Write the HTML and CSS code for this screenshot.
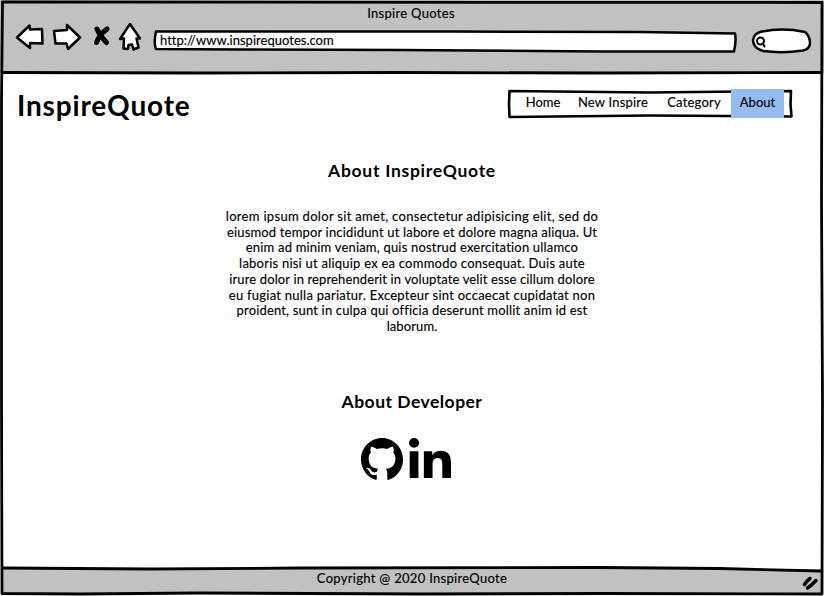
FILE: index.html
```
<!DOCTYPE html>
<html lang="en">
<head>
<meta charset="utf-8">
<title>Inspire Quotes</title>
<link rel="stylesheet" href="styles.css">
</head>
<body>
<div class="window">
  <header class="chrome">
    <div class="title"><span>Inspire Quotes</span></div>
    <div class="toolbar">
      <svg class="controls" width="130" height="32" viewBox="14 21 130 32">
        <g class="ink">
          <path d="M17 37.500L29.500 25.500L30 29.500L42 29L42.500 43.500L30 43V48Z"/>
          <path d="M54 31L67 30V25L80 37.500L68 49L66.500 43.500L55.500 43.500Z"/>
          <path d="M130 24L140 38.500L136.500 38.500L138.500 47.500L133.500 49.500L132 44.500L128.500 45L128 49L123.500 48.500L124 38.500L120 39Z"/>
        </g>
        <path class="cross" d="M97 29Q100 36 106.500 42.500M107 29Q99 35 96.500 42.500"/>
      </svg>
      <div class="address">
        <svg class="outline" width="584" height="24" viewBox="153 29 584 24"><path class="ink" d="M156 31.500L450 31.500L640 32L735 33.500Q736.500 41 734 51.500L600 51.500L400 50L240 49.500L156 49Q153.500 43 156 31.500Z"/></svg>
        <span class="url">http://www.inspirequotes.com</span>
      </div>
      <svg class="search" width="62" height="26" viewBox="750 28 62 26">
        <path class="ink" d="M762 31.500Q783 27.500 805 32Q810 36 810 43Q810 49 803 50.500Q783 53.500 763 51Q753 48 753 40Q754 33 762 31.500Z"/>
        <circle class="lens" cx="760.500" cy="41" r="3.500"/><path class="lens" d="M763 43.500L764.500 46.500"/>
      </svg>
    </div>
  </header>
  <main class="page">
    <div class="top">
      <h1>InspireQuote</h1>
      <nav>
        <svg class="outline" width="287" height="30" viewBox="507 89 287 30"><path class="nav-line" d="M509.500 91L650 92.500L791 91L790.500 104L791.500 116.500L650 115.500L509.500 117L509 104Z"/></svg>
        <a class="home">Home</a><a class="new">New Inspire</a><a class="category">Category</a><a class="active">About</a>
      </nav>
    </div>
    <section class="about">
      <h2 class="h-quote">About InspireQuote</h2>
      <p>
        <span class="l1">lorem ipsum dolor sit amet, consectetur adipisicing elit, sed do</span>
        <span class="l2">eiusmod tempor incididunt ut labore et dolore magna aliqua. Ut</span>
        <span class="l3">enim ad minim veniam, quis nostrud exercitation ullamco</span>
        <span class="l4">laboris nisi ut aliquip ex ea commodo consequat. Duis aute</span>
        <span class="l5">irure dolor in reprehenderit in voluptate velit esse cillum dolore</span>
        <span class="l6">eu fugiat nulla pariatur. Excepteur sint occaecat cupidatat non</span>
        <span class="l7">proident, sunt in culpa qui officia deserunt mollit anim id est</span>
        <span class="l8">laborum.</span>
      </p>
    </section>
    <section class="developer">
      <h2 class="h-dev">About Developer</h2>
      <div class="social">
        <svg width="42" height="42" viewBox="0 0 16 15.650" preserveAspectRatio="none"><path d="M8 0C3.580 0 0 3.580 0 8c0 3.540 2.290 6.530 5.470 7.590.4.070.55-.17.55-.38 0-.19-.01-.82-.01-1.490-2.010.37-2.530-.49-2.690-.94-.09-.23-.48-.94-.82-1.130-.28-.15-.68-.52-.01-.53.63-.01 1.080.58 1.230.82.72 1.210 1.870.87 2.330.66.070-.52.28-.87.51-1.070-1.780-.2-3.640-.89-3.640-3.950 0-.87.31-1.590.82-2.150-.08-.2-.36-1.020.08-2.120 0 0 .67-.21 2.200.82.64-.18 1.320-.27 2-.27s1.360.09 2 .27c1.530-1.040 2.200-.82 2.200-.82.44 1.100.16 1.920.08 2.120.51.56.82 1.270.82 2.150 0 3.070-1.870 3.750-3.650 3.950.29.25.54.73.54 1.480 0 1.070-.01 1.930-.01 2.200 0 .21.15.46.55.38A8.010 8.010 0 0 0 16 8c0-4.420-3.580-8-8-8z"/></svg>
        <svg width="42" height="40" viewBox="0 0 448 448" preserveAspectRatio="none"><path d="M100.280 448H7.400V148.900h92.880zM53.790 108.100C24.090 108.100 0 83.500 0 53.800a53.790 53.790 0 0 1 107.580 0c0 29.700-24.100 54.300-53.790 54.300zM447.900 448h-92.680V302.400c0-34.700-.7-79.200-48.290-79.200-48.290 0-55.690 37.700-55.690 76.700V448h-92.780V148.900h89.080v40.800h1.300c12.400-23.500 42.690-48.300 87.880-48.300 94 0 111.280 61.900 111.280 142.300V448z"/></svg>
      </div>
    </section>
  </main>
  <footer><span>Copyright @ 2020 InspireQuote</span></footer>
  <svg class="frame" width="824" height="596" viewBox="0 0 824 596">
    <path class="gray" d="M3 568.500L300 568.500L600 567.500L720 568.500L821 571V593H3Z"/>
    <path class="line" d="M2.500 2L822 2.500L821.500 200L822.500 400L822 594L600 593.500L420 594L200 593L80 594L2 593.500L1.500 400L1.500 100Z"/>
    <path class="line" d="M3 72.500L200 73L400 72.500L600 73L822 72.500M3 568L150 569L300 568L600 567.500L720 568.500L821 571"/>
    <path class="grip" d="M804.500 584.500Q807 580.500 810 578.500M807.500 588Q812 585 816 580.500"/>
  </svg>
</div>
</body>
</html>
```
FILE: styles.css
```
* { box-sizing: border-box; }
body { margin: 0; background: #fff; color: #000; font: 13px/16px Lato, "Open Sans", sans-serif; font-variant-ligatures: none; -webkit-text-stroke: .15px #000; }
svg { display: block; }
.window { position: relative; width: 824px; height: 596px; display: flex; flex-direction: column; overflow: hidden; }
.chrome { height: 73px; background: #c1c1c1; padding: 6px 12px 0 14px; }
.title { text-align: center; height: 15px; line-height: 14px; padding-right: 4px; letter-spacing: .3px; }
.toolbar { display: flex; align-items: flex-start; }
.controls { margin-right: 9px; }
.address { position: relative; width: 584px; height: 24px; margin: 8px 13px 0 0; padding: 3px 0 0 7px; }
.search { margin-top: 7px; }
.outline { position: absolute; left: 0; top: 0; }
.url { position: relative; white-space: nowrap; letter-spacing: .02px; }
.ink { fill: #fff; stroke: #000; stroke-width: 2.5; stroke-linejoin: round; }
.cross { fill: none; stroke: #000; stroke-width: 5; stroke-linecap: round; }
.lens { fill: none; stroke: #000; stroke-width: 2; stroke-linecap: round; }
.page { flex: 1; }
.top { display: flex; justify-content: space-between; padding: 16px 30px 0 17px; height: 80px; }
h1 { margin: 0; font-size: 28px; line-height: 32px; font-weight: 700; letter-spacing: .85px; -webkit-text-stroke: 0; }
nav { position: relative; width: 287px; height: 30px; display: flex; padding-left: 10px; }
nav a { position: relative; height: 29px; line-height: 27px; text-align: center; white-space: nowrap; }
.nav-line { fill: #fff; stroke: #000; stroke-width: 2.6; stroke-linejoin: round; }
.home { width: 52px; }
.new { width: 88px; letter-spacing: .2px; }
.category { width: 74px; letter-spacing: .2px; }
.active { width: 53px; background: #94bbf2; }
h2 { margin: 0; font-size: 17.5px; line-height: 22px; font-weight: 700; text-align: center; -webkit-text-stroke: 0; }
.h-quote { letter-spacing: .72px; }
.h-dev { letter-spacing: .48px; }
.about { padding-top: 7px; height: 238px; }
p { margin: 27px 0 0; line-height: 15.7px; }
p span { display: block; text-align: center; white-space: nowrap; }
.l1 { letter-spacing: .31px; }
.l2 { letter-spacing: .17px; }
.l3 { letter-spacing: .19px; }
.l4 { letter-spacing: .23px; }
.l5 { letter-spacing: .13px; }
.l6 { letter-spacing: .25px; }
.l7 { letter-spacing: .17px; }
.l8 { letter-spacing: .1px; }
.social { display: flex; justify-content: center; gap: 6px; padding: 25px 12px 0 0; }
footer { height: 28px; text-align: center; line-height: 20px; letter-spacing: .3px; }
footer span, .title span { position: relative; z-index: 1; }
.frame { position: absolute; left: 0; top: 0; pointer-events: none; }
.gray { fill: #c1c1c1; }
.line { fill: none; stroke: #000; stroke-width: 2.8; stroke-linejoin: round; }
.grip { fill: none; stroke: #000; stroke-width: 3.4; stroke-linecap: round; }
```
